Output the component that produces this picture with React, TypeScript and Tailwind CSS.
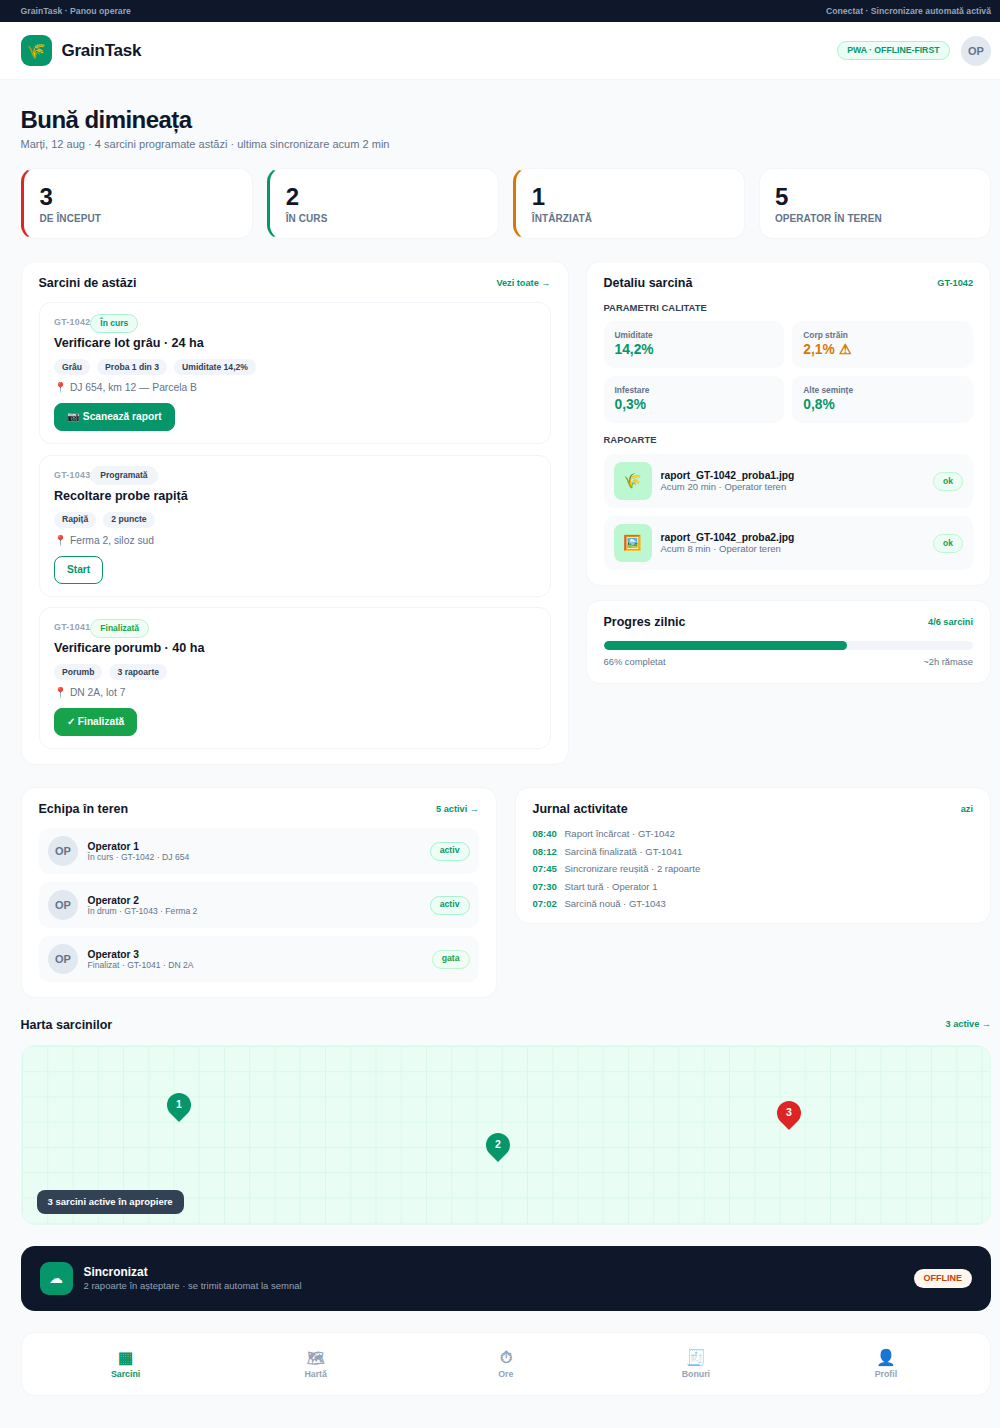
const stats = [
  { value: '3', label: 'DE ÎNCEPUT', border: 'border-l-[3px] border-l-[#dc2626] pl-[16px]' },
  { value: '2', label: 'ÎN CURS', border: 'border-l-[3px] border-l-[#059669] pl-[16px]' },
  { value: '1', label: 'ÎNTÂRZIATĂ', border: 'border-l-[3px] border-l-[#d97706] pl-[16px]' },
  { value: '5', label: 'OPERATOR ÎN TEREN', border: 'pl-[15px]' },
]

const tasks = [
  {
    id: 'GT-1042',
    status: 'În curs',
    statusClass: 'bg-[#ecfdf5] border-[#a7f3d0] text-[#059669]',
    title: 'Verificare lot grâu · 24 ha',
    chips: ['Grâu', 'Proba 1 din 3', 'Umiditate 14,2%'],
    place: 'DJ 654, km 12 — Parcela B',
    action: '📷 Scanează raport',
    actionClass: 'bg-[#059669] text-white border-[#059669]',
  },
  {
    id: 'GT-1043',
    status: 'Programată',
    statusClass: 'bg-[#f1f5f9] border-[#f1f5f9] text-[#334155]',
    title: 'Recoltare probe rapiță',
    chips: ['Rapiță', '2 puncte'],
    place: 'Ferma 2, siloz sud',
    action: 'Start',
    actionClass: 'bg-white text-[#059669] border-[#059669]',
  },
  {
    id: 'GT-1041',
    status: 'Finalizată',
    statusClass: 'bg-[#f0fdf4] border-[#bbf7d0] text-[#16a34a]',
    title: 'Verificare porumb · 40 ha',
    chips: ['Porumb', '3 rapoarte'],
    place: 'DN 2A, lot 7',
    action: '✓ Finalizată',
    actionClass: 'bg-[#16a34a] text-white border-[#16a34a]',
  },
]

const params = [
  { label: 'Umiditate', value: '14,2%', color: 'text-[#059669]' },
  { label: 'Corp străin', value: '2,1% ⚠', color: 'text-[#d97706]' },
  { label: 'Infestare', value: '0,3%', color: 'text-[#059669]' },
  { label: 'Alte semințe', value: '0,8%', color: 'text-[#059669]' },
]

const reports = [
  { icon: '🌾', name: 'raport_GT-1042_proba1.jpg', meta: 'Acum 20 min · Operator teren' },
  { icon: '🖼️', name: 'raport_GT-1042_proba2.jpg', meta: 'Acum 8 min · Operator teren' },
]

const team = [
  { name: 'Operator 1', meta: 'În curs · GT-1042 · DJ 654', tag: 'activ', tagClass: 'bg-[#ecfdf5] border-[#a7f3d0] text-[#059669]' },
  { name: 'Operator 2', meta: 'În drum · GT-1043 · Ferma 2', tag: 'activ', tagClass: 'bg-[#ecfdf5] border-[#a7f3d0] text-[#059669]' },
  { name: 'Operator 3', meta: 'Finalizat · GT-1041 · DN 2A', tag: 'gata', tagClass: 'bg-[#f0fdf4] border-[#bbf7d0] text-[#16a34a]' },
]

const journal = [
  ['08:40', 'Raport încărcat · GT-1042'],
  ['08:12', 'Sarcină finalizată · GT-1041'],
  ['07:45', 'Sincronizare reușită · 2 rapoarte'],
  ['07:30', 'Start tură · Operator 1'],
  ['07:02', 'Sarcină nouă · GT-1043'],
]

const nav = [
  { icon: '▦', label: 'Sarcini', size: 'text-[16px]', active: true },
  { icon: '🗺', label: 'Hartă', size: 'text-[14px]' },
  { icon: '⏱', label: 'Ore', size: 'text-[16px]' },
  { icon: '🧾', label: 'Bonuri', size: 'text-[16px]' },
  { icon: '👤', label: 'Profil', size: 'text-[16px]' },
]

const pins = [
  { n: 1, pos: 'left-[15%] top-[26.5%]', color: 'bg-[#059669]' },
  { n: 2, pos: 'left-[48%] top-[49%]', color: 'bg-[#059669]' },
  { n: 3, pos: 'left-[78%] top-[31%]', color: 'bg-[#dc2626]' },
]

function PanelHead({ title, link }: { title: string; link: string }) {
  return (
    <div className="flex items-center justify-between mb-[11px]">
      <h2 className="text-[12.5px] leading-[16px] font-bold text-[#0f172a]">{title}</h2>
      <span className="text-[9.2px] font-bold text-[#059669] pt-[2px]">{link}</span>
    </div>
  )
}

function Avatar() {
  return (
    <div className="w-[30px] h-[30px] rounded-full bg-[#e2e8f0] text-[#64748b] text-[11px] font-bold flex items-center justify-center shrink-0 pt-[1px]">
      OP
    </div>
  )
}

export default function App() {
  return (
    <div className="min-h-[1428px] bg-[#f8fafb] font-['Liberation_Sans',Arial,sans-serif] text-[#0f172a]">
      <div className="h-[22px] bg-[#0f172a] pl-[20.5px] pr-[9px] pt-[1px] flex items-center justify-between text-[8.7px] font-bold text-[#94a3b8]">
        <span>GrainTask · Panou operare</span>
        <span>Conectat · Sincronizare automată activă</span>
      </div>

      <header className="h-[58px] bg-white border-b border-[#f1f5f9] pl-[20.5px] pr-[9px] flex items-center justify-between">
        <div className="flex items-center gap-[9.5px]">
          <div className="w-[31.5px] h-[31.5px] rounded-[9px] bg-[#059669] flex items-center justify-center text-[16px]">🌾</div>
          <span className="text-[17px] font-bold tracking-[-0.25px]">GrainTask</span>
        </div>
        <div className="flex items-center gap-[11px]">
          <span className="h-[19px] px-[9.5px] rounded-full bg-[#ecfdf5] border border-[#a7f3d0] text-[#059669] text-[8.7px] font-bold flex items-center">
            PWA · OFFLINE-FIRST
          </span>
          <Avatar />
        </div>
      </header>

      <main className="pl-[20.5px] pr-[9px] pt-[26px]">
        <h1 className="text-[24px] leading-[28px] font-bold tracking-[-0.55px]">Bună dimineața</h1>
        <p className="text-[11.05px] leading-[14px] mt-[3px] text-[#64748b]">
          Marți, 12 aug · 4 sarcini programate astăzi · ultima sincronizare acum 2 min
        </p>

        <section className="grid grid-cols-4 gap-[14px] mt-[17px]">
          {stats.map((s) => (
            <div key={s.label} className={`h-[71px] bg-white rounded-[14px] border border-[#f3f5f7] pt-[14px] ${s.border}`}>
              <div className="text-[24px] leading-[28px] font-bold">{s.value}</div>
              <div className="text-[10px] leading-[12px] mt-[2px] font-bold tracking-[0.1px] text-[#64748b]">{s.label}</div>
            </div>
          ))}
        </section>

        <section className="grid grid-cols-[548px_1fr] gap-[17px] mt-[22px] items-start">
          <div className="bg-white rounded-[14px] border border-[#f3f5f7] px-[17px] pt-[13px] pb-[15px]">
            <PanelHead title="Sarcini de astăzi" link="Vezi toate →" />
            <div className="flex flex-col gap-[10.5px]">
              {tasks.map((t) => (
                <div key={t.id} className="rounded-[12px] border border-[#f1f5f9] px-[14.5px] pt-[10px] pb-[12px]">
                  <div className="flex items-center h-[20px]">
                    <span className="text-[8.8px] font-bold text-[#94a3b8] tracking-[0.3px]">{t.id}</span>
                    <span className={`h-[19px] px-[9px] rounded-full border text-[8.5px] font-bold flex items-center ${t.statusClass}`}>{t.status}</span>
                  </div>
                  <div className="text-[12.6px] leading-[16px] font-bold mt-[2px]">{t.title}</div>
                  <div className="flex gap-[7px] mt-[8px]">
                    {t.chips.map((c) => (
                      <span key={c} className="h-[16px] px-[8px] rounded-full bg-[#f1f5f9] text-[#334155] text-[8.6px] font-bold flex items-center">{c}</span>
                    ))}
                  </div>
                  <div className="text-[10.3px] leading-[14px] mt-[6px] text-[#64748b]">📍 {t.place}</div>
                  <button className={`mt-[8px] h-[28px] px-[12px] rounded-[8px] border text-[10.2px] font-bold block ${t.actionClass}`}>{t.action}</button>
                </div>
              ))}
            </div>
          </div>

          <div className="flex flex-col gap-[14px]">
            <div className="bg-white rounded-[14px] border border-[#f3f5f7] px-[17px] pt-[13px] pb-[15px]">
              <PanelHead title="Detaliu sarcină" link="GT-1042" />
              <div className="text-[9.45px] leading-[11px] font-bold text-[#334155] mb-[8px]">PARAMETRI CALITATE</div>
              <div className="grid grid-cols-2 gap-[8px]">
                {params.map((p) => (
                  <div key={p.label} className="h-[47px] bg-[#f8fafb] rounded-[10px] px-[11px] pt-[9px]">
                    <div className="text-[8.4px] leading-[11px] font-bold text-[#64748b]">{p.label}</div>
                    <div className={`text-[13.8px] leading-[18px] font-bold ${p.color}`}>{p.value}</div>
                  </div>
                ))}
              </div>
              <div className="text-[9.45px] leading-[12px] font-bold text-[#334155] mt-[11px] mb-[8px]">RAPOARTE</div>
              <div className="flex flex-col gap-[8px]">
                {reports.map((r) => (
                  <div key={r.name} className="h-[54px] bg-[#f8fafb] rounded-[10px] px-[10px] flex items-center gap-[9px]">
                    <div className="w-[38px] h-[38px] rounded-[8px] bg-[#bbf7d0] flex items-center justify-center text-[15px]">{r.icon}</div>
                    <div className="flex-1">
                      <div className="text-[10.3px] leading-[11px] font-bold">{r.name}</div>
                      <div className="text-[9.5px] leading-[11px] text-[#64748b]">{r.meta}</div>
                    </div>
                    <span className="h-[19px] px-[9px] rounded-full bg-[#ecfdf5] border border-[#bbf7d0] text-[#16a34a] text-[8.5px] font-bold flex items-center">ok</span>
                  </div>
                ))}
              </div>
            </div>

            <div className="bg-white rounded-[14px] border border-[#f3f5f7] px-[17px] pt-[13px] pb-[15px]">
              <PanelHead title="Progres zilnic" link="4/6 sarcini" />
              <div className="h-[9px] rounded-full bg-[#f1f5f9] overflow-hidden">
                <div className="h-full bg-[#059669] rounded-full" style={{ width: '66%' }} />
              </div>
              <div className="flex justify-between mt-[6px] text-[9.4px] leading-[12px] text-[#64748b]">
                <span>66% completat</span>
                <span>~2h rămase</span>
              </div>
            </div>
          </div>
        </section>

        <section className="grid grid-cols-2 gap-[17.5px] mt-[22px] items-start">
          <div className="bg-white rounded-[14px] border border-[#f3f5f7] px-[17px] pt-[13px] pb-[15px]">
            <PanelHead title="Echipa în teren" link="5 activi →" />
            <div className="flex flex-col gap-[8px]">
              {team.map((m) => (
                <div key={m.name} className="h-[46px] bg-[#f8fafb] rounded-[10px] px-[9.5px] flex items-center gap-[9.5px]">
                  <Avatar />
                  <div className="flex-1">
                    <div className="text-[10.2px] leading-[11px] font-bold">{m.name}</div>
                    <div className="text-[8.6px] leading-[10px] text-[#64748b]">{m.meta}</div>
                  </div>
                  <span className={`h-[19px] px-[9px] rounded-full border text-[8.7px] font-bold flex items-center ${m.tagClass}`}>{m.tag}</span>
                </div>
              ))}
            </div>
          </div>

          <div className="bg-white rounded-[14px] border border-[#f3f5f7] px-[17px] pt-[13px] pb-[14px]">
            <PanelHead title="Jurnal activitate" link="azi" />
            <div className="flex flex-col gap-[6.5px]">
              {journal.map(([time, text]) => (
                <div key={time} className="flex text-[9.5px] leading-[11px] text-[#64748b]">
                  <span className="w-[32px] font-bold text-[#059669]">{time}</span>
                  <span>{text}</span>
                </div>
              ))}
            </div>
          </div>
        </section>

        <section className="mt-[19px]">
          <div className="flex items-center justify-between mb-[12px]">
            <h2 className="text-[12.5px] leading-[16px] font-bold">Harta sarcinilor</h2>
            <span className="text-[9.2px] font-bold text-[#059669]">3 active →</span>
          </div>
          <div className="relative h-[180px] rounded-[14px] border border-[#e6f9f0] overflow-hidden bg-[#e9fdf4] bg-[linear-gradient(#daf8ea_1px,transparent_1px),linear-gradient(90deg,#daf8ea_1px,transparent_1px)] bg-[size:25.25px_25.25px]">
            {pins.map((p) => (
              <div key={p.n} className={`absolute ${p.pos} w-[24px] h-[24px] rounded-[50%_50%_50%_0] -rotate-45 flex items-center justify-center ${p.color}`}>
                <span className="rotate-45 text-white text-[10.5px] font-bold">{p.n}</span>
              </div>
            ))}
            <div className="absolute left-[15px] bottom-[10px] h-[24px] px-[11px] rounded-[8px] bg-[#334155] text-white text-[9.5px] font-bold flex items-center">
              3 sarcini active în apropiere
            </div>
          </div>
        </section>

        <section className="mt-[21px] h-[65px] rounded-[14px] bg-[#0f172a] px-[19px] flex items-center gap-[11px]">
          <div className="w-[33px] h-[33px] rounded-[9px] bg-[#059669] flex items-center justify-center text-white text-[14px]">☁</div>
          <div className="flex-1">
            <div className="text-[11.9px] leading-[13px] font-bold text-white">Sincronizat</div>
            <div className="text-[9.5px] leading-[13px] text-[#94a3b8]">2 rapoarte în așteptare · se trimit automat la semnal</div>
          </div>
          <span className="h-[19px] px-[10px] rounded-full bg-[#fff7ed] text-[#c2410c] text-[9px] font-bold flex items-center">OFFLINE</span>
        </section>

        <nav className="mt-[21px] h-[64px] rounded-[14px] bg-white border border-[#f3f5f7] px-[9px] grid grid-cols-5">
          {nav.map((n) => (
            <div key={n.label} className={`flex flex-col items-center justify-center font-bold ${n.active ? 'text-[#059669]' : 'text-[#94a3b8]'}`}>
              <span className={`${n.size} leading-[20px]`}>{n.icon}</span>
              <span className="text-[8.8px] leading-[12px]">{n.label}</span>
            </div>
          ))}
        </nav>
      </main>
    </div>
  )
}
